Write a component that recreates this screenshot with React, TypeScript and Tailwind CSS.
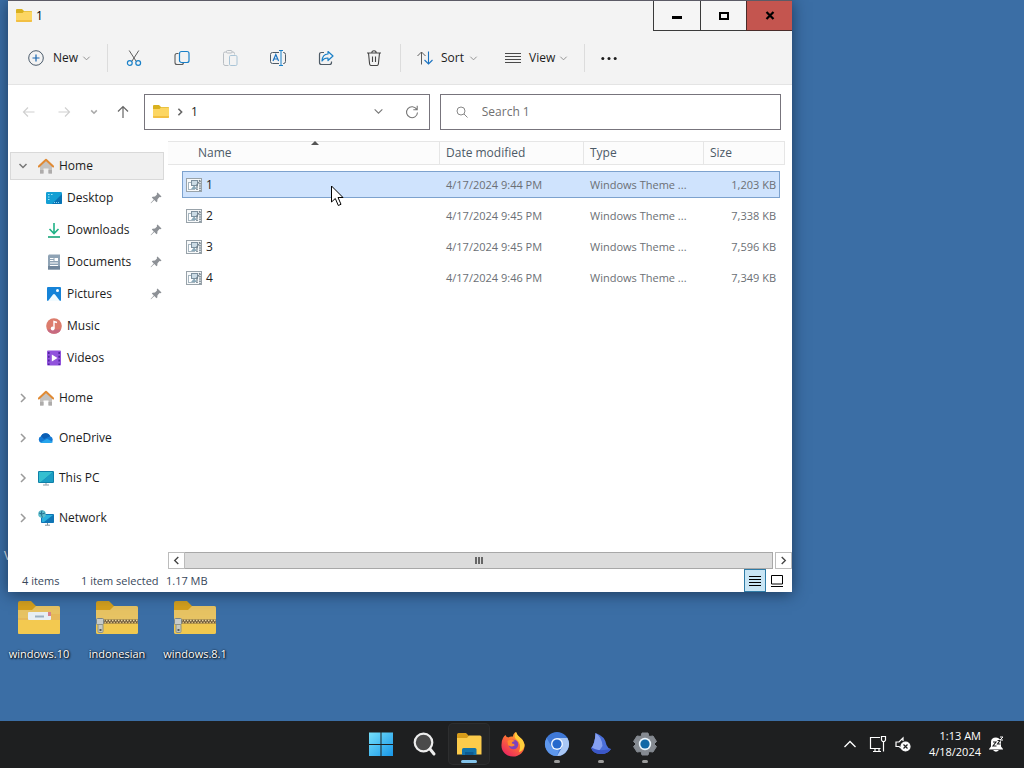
import type { ReactNode } from "react";

const files = [
  { name: "1", date: "4/17/2024 9:44 PM", size: "1,203 KB", selected: true },
  { name: "2", date: "4/17/2024 9:45 PM", size: "7,338 KB", selected: false },
  { name: "3", date: "4/17/2024 9:45 PM", size: "7,596 KB", selected: false },
  { name: "4", date: "4/17/2024 9:46 PM", size: "7,349 KB", selected: false },
];

const Chevron = ({ dir = "down", className = "" }: { dir?: "down" | "right" | "left"; className?: string }) => {
  const paths = { down: "M1.5 3 L5 6.5 L8.5 3", right: "M3 1 L7 5 L3 9", left: "M7 1 L3 5 L7 9" };
  return (
    <svg viewBox="0 0 10 10" className={`shrink-0 ${className}`} fill="none" stroke="currentColor">
      <path d={paths[dir]} />
    </svg>
  );
};

const Icon = ({ children }: { children: ReactNode }) => (
  <svg viewBox="0 0 16 16" className="size-4 shrink-0" fill="none" aria-hidden="true">
    {children}
  </svg>
);

const FolderIcon = () => (
  <Icon>
    <path d="M0 2 Q0 1 1 1 H6 L8 3 H15 Q16 3 16 4 V8 H0Z" fill="#d9b11f" />
    <path d="M0 5 H6.5 L8 3.5 H15 Q16 3.5 16 4.5 V13 Q16 14 15 14 H1 Q0 14 0 13Z" fill="#fcd663" />
    <path d="M0 12 H16 V13 Q16 14 15 14 H1 Q0 14 0 13Z" fill="#f2bf42" />
  </Icon>
);

const HomeIcon = () => (
  <Icon>
    <path d="M2 7 L8 2 L14 7 V15.5 H10.5 V10.5 H5.5 V15.5 H2Z" fill="#c4c2c0" />
    <path d="M2 12 H5.5 V15.5 H2Z M10.5 12 H14 V15.5 H10.5Z" fill="#aeacab" />
    <path d="M0.8 8.5 L8 1.8 L15.2 8.5" stroke="#e08a34" strokeWidth="2" strokeLinejoin="round" strokeLinecap="round" />
  </Icon>
);

const DesktopIcon = () => (
  <Icon>
    <rect y="2" width="16" height="12" rx="1.2" fill="#149fd4" />
    <path d="M6 14 L16 4 V13 Q16 14 15 14Z" fill="#0873b4" />
    <path d="M2 4.5h1.5M2 7h1.5M2 9.5h1.5M5 4.5h1.5" stroke="#9be7fb" />
    <path d="M8 12.5h6" stroke="#8ed5f4" strokeDasharray="1 1" />
  </Icon>
);

const DownloadsIcon = () => (
  <Icon>
    <path d="M8 1 V11.5 M3.5 7 L8 11.5 L12.5 7" stroke="#1fb286" strokeWidth="1.6" />
    <path d="M2 15 H14" stroke="#17a578" strokeWidth="1.6" />
  </Icon>
);

const DocumentsIcon = () => (
  <Icon>
    <path d="M3 0.5 H14 V15.5 H2 V1.5Z" fill="#8fa3b5" />
    <path d="M2 12 H14 V15.5 H2Z" fill="#70859a" />
    <path d="M4 4.5h3.5M4 6.5h3.5M4 9h8M4 11.5h8" stroke="#fff" />
    <rect x="8.5" y="4" width="3.5" height="3" fill="#fff" />
  </Icon>
);

const PicturesIcon = () => (
  <Icon>
    <rect x="1" y="1" width="14" height="14" rx="1" fill="#1683d8" />
    <path d="M2 15 L7 8.5 Q8 7.5 9 8.5 L14 15Z" fill="#f2fbff" />
    <circle cx="11.5" cy="4.5" r="1.5" fill="#fff" />
  </Icon>
);

const MusicIcon = () => (
  <Icon>
    <circle cx="8" cy="8" r="7.8" fill="#dc7c6c" />
    <path d="M1 11.5 A7.8 7.8 0 0 0 15 11.5Z" fill="#c76a80" />
    <circle cx="6.7" cy="10.5" r="1.9" fill="#fff" />
    <path d="M8 10.5 V3.5 L11 4.5" stroke="#fff" strokeWidth="1.4" />
  </Icon>
);

const VideosIcon = () => (
  <Icon>
    <rect x="1" y="0.5" width="14" height="15" rx="1" fill="#9152dc" />
    <path d="M2.8 2 V15 M13.2 2 V15" stroke="#4e249c" strokeWidth="1.6" strokeDasharray="2 1.8" />
    <path d="M5.8 4.5 L11.5 8 L5.8 11.5Z" fill="#fff" />
  </Icon>
);

const OneDriveIcon = () => (
  <Icon>
    <path d="M3.5 13 A3.5 3.5 0 0 1 3 6.3 A5 5 0 0 1 12.2 6.2 A3.6 3.6 0 0 1 12.5 13Z" fill="#1479d4" />
    <path d="M3 6.3 A5 5 0 0 1 12.2 6.2 L6 9Z" fill="#0b5eb4" />
    <path d="M2.5 12.5 L9 8.7 L15 12 Q14 13 12.5 13 H3.5Z" fill="#27a5ec" />
  </Icon>
);

const PcIcon = () => (
  <Icon>
    <rect y="1" width="16" height="12" rx="1" fill="#0f80a8" />
    <path d="M1 2 H15 L3 12 H1Z" fill="#35bfd0" />
    <path d="M15 2 V12 H3Z" fill="#1b9dc4" />
    <path d="M8 13 V14.8 M5 15 H11" stroke="#8a9aa5" />
  </Icon>
);

const NetworkIcon = () => (
  <Icon>
    <rect x="3" y="4" width="13" height="9" rx="0.8" fill="#0f75b5" />
    <path d="M4 5 H15 L6 12 H4Z" fill="#2bb1dd" />
    <path d="M9.5 13 V15 M7 15.2 H12" stroke="#7f919d" />
    <circle cx="4" cy="4" r="3.8" fill="#5cbccb" />
    <path d="M1 3 Q4 5 7 3 M4 0.5 Q2 4 4.5 7.5" stroke="#256f90" />
  </Icon>
);

const ThemeIcon = () => (
  <Icon>
    <rect x="0.5" y="1.5" width="15" height="13" fill="#f7f9fa" stroke="#98a2a9" />
    <rect x="2.5" y="5.5" width="6" height="7" fill="#fff" stroke="#a6b5bf" />
    <rect x="5.5" y="3.5" width="6" height="5" fill="#cbdbe5" stroke="#7d909e" />
    <path d="M5 12 L8 8.500 L11 12Z" fill="#8aa9b9" />
    <path d="M11 13 V8 L14 3 V14" stroke="#71818c" strokeWidth="1.6" strokeDasharray="1.5 0.8" />
  </Icon>
);

const PinIcon = () => (
  <svg viewBox="0 0 12 12" className="size-3 shrink-0" aria-hidden="true">
    <path d="M7.5 0.5 L11.5 4.5 L10.5 5.2 L9.5 5 L7.5 7.2 L7.3 9.5 L6.5 10.2 L4.3 8 L1 11.3 L0.6 11 L3.8 7.5 L1.8 5.5 L2.6 4.7 L5 4.5 L7 2.5 L6.8 1.3Z" fill="#8d9196" />
  </svg>
);

const quickAccess = [
  { label: "Desktop", icon: <DesktopIcon />, pinned: true },
  { label: "Downloads", icon: <DownloadsIcon />, pinned: true },
  { label: "Documents", icon: <DocumentsIcon />, pinned: true },
  { label: "Pictures", icon: <PicturesIcon />, pinned: true },
  { label: "Music", icon: <MusicIcon />, pinned: false },
  { label: "Videos", icon: <VideosIcon />, pinned: false },
];

const roots = [
  { label: "Home", icon: <HomeIcon /> },
  { label: "OneDrive", icon: <OneDriveIcon /> },
  { label: "This PC", icon: <PcIcon /> },
  { label: "Network", icon: <NetworkIcon /> },
];

const tools = [
  {
    label: "Cut",
    icon: (
      <Icon>
        <path d="M3.2 0.5 L10.3 11.5 M12.8 0.5 L5.7 11.5" stroke="#5c5c5c" />
        <circle cx="3.8" cy="13" r="2.4" stroke="#1a80c8" strokeWidth="1.2" />
        <circle cx="12.2" cy="13" r="2.4" stroke="#1a80c8" strokeWidth="1.2" />
      </Icon>
    ),
  },
  {
    label: "Copy",
    icon: (
      <Icon>
        <path d="M4.5 3.5 H3 Q1 3.5 1 5.5 V12.5 Q1 14.5 3 14.5 H7.5 Q9.5 14.5 9.5 12.5" stroke="#5c5c5c" strokeWidth="1.1" />
        <rect x="5.5" y="1.5" width="9.5" height="11" rx="2" stroke="#1a80c8" strokeWidth="1.2" />
      </Icon>
    ),
  },
  {
    label: "Paste",
    icon: (
      <Icon>
        <path d="M4.5 2 H3 Q1.5 2 1.5 3.5 V13.5 Q1.5 15.5 3 15.5 H6.5 M10 2 H11 Q12.5 2 12.5 3.5 V4.5" stroke="#b9bec3" />
        <rect x="4.5" y="0.5" width="5.5" height="2.5" rx="1" stroke="#b9bec3" />
        <rect x="7.5" y="5.5" width="7.5" height="10" rx="1.2" stroke="#a9c4d6" />
      </Icon>
    ),
  },
  {
    label: "Rename",
    icon: (
      <Icon>
        <path d="M9 2.5 H2.5 Q0.5 2.5 0.5 4.5 V11.5 Q0.5 13.5 2.5 13.5 H9 M13 2.5 H13.5 Q15.5 2.5 15.5 4.5 V11.5 Q15.5 13.5 13.5 13.5 H13" stroke="#4e5b66" />
        <path d="M3 11 L5.8 4.5 L8.6 11 M4 9 H7.6" stroke="#1a72c0" strokeWidth="1.2" />
        <path d="M9 0.5 H13 M9 15.5 H13 M11 0.5 V15.5" stroke="#1a80c8" />
      </Icon>
    ),
  },
  {
    label: "Share",
    icon: (
      <Icon>
        <path d="M6 2.5 H3.5 Q1.5 2.5 1.5 4.5 V12.5 Q1.5 14.5 3.5 14.5 H11.5 Q13.5 14.5 13.5 12.5 V11.5" stroke="#4e5b66" strokeWidth="1.2" />
        <path d="M10 1.5 L15 6 L10 10.5 V8 Q6 7.8 4 11 Q4.3 4.3 10 4Z" stroke="#1a80c8" strokeWidth="1.2" strokeLinejoin="round" />
      </Icon>
    ),
  },
  {
    label: "Delete",
    icon: (
      <Icon>
        <path d="M1 3 H15 M5.8 3 Q5.8 0.7 8 0.7 Q10.2 0.7 10.2 3 M2.5 3 L3.6 14 Q3.8 15.5 5.2 15.5 H10.8 Q12.2 15.5 12.4 14 L13.5 3" stroke="#454545" strokeWidth="1.1" />
        <path d="M6.5 6.5 V12 M9.5 6.5 V12" stroke="#454545" strokeWidth="1.1" />
      </Icon>
    ),
  },
];

const Toolbar = () => (
  <div className="flex h-[54px] items-center border-b border-[#e4e4e4] pt-px pl-5 text-[#1c1c1c]">
    <button className="flex items-center">
      <Icon>
        <circle cx="8" cy="8" r="7.3" stroke="#4b5b6b" />
        <path d="M8 4.5 V11.5 M4.5 8 H11.5" stroke="#1a66b0" strokeWidth="1.2" />
      </Icon>
      <span className="w-[38px] pl-[9px] text-left">New</span>
      <Chevron className="size-[9px] text-[#888]" />
    </button>
    <span className="ml-4 h-7 w-px bg-[#dcdcdc]" />
    <div className="ml-[2px] flex">
      {tools.map((t) => (
        <button key={t.label} aria-label={t.label} className="flex h-8 w-12 items-center justify-center">
          {t.icon}
        </button>
      ))}
    </div>
    <span className="ml-[2px] h-7 w-px bg-[#dcdcdc]" />
    <button className="ml-4 flex items-center">
      <Icon>
        <path d="M4.5 14.5 V2 M0.5 6 L4.5 2 L8.5 6" stroke="#5c5c5c" />
        <path d="M11.5 1.5 V14 M7.5 10 L11.5 14 L15.5 10" stroke="#1a72c0" strokeWidth="1.1" />
      </Icon>
      <span className="w-9 pl-2 text-left">Sort</span>
      <Chevron className="size-[9px] text-[#888]" />
    </button>
    <button className="ml-[27px] flex items-center">
      <Icon>
        <path d="M0 3.5 H16 M0 6.5 H16 M0 9.5 H16 M0 12.5 H16" stroke="#4a4a4a" />
      </Icon>
      <span className="w-[38px] pl-2 text-left">View</span>
      <Chevron className="size-[9px] text-[#888]" />
    </button>
    <span className="ml-4 h-7 w-px bg-[#dcdcdc]" />
    <button aria-label="See more" className="ml-4">
      <Icon>
        <circle cx="1.8" cy="8.5" r="1.5" fill="#1c1c1c" />
        <circle cx="8" cy="8.5" r="1.5" fill="#1c1c1c" />
        <circle cx="14.2" cy="8.5" r="1.5" fill="#1c1c1c" />
      </Icon>
    </button>
  </div>
);

const AddressRow = () => (
  <div className="flex h-14 items-center bg-white pr-[11px] pb-[2px] text-[#707070]">
    <button aria-label="Back" className="ml-[13px] text-[#d0d0d0]">
      <Icon><path d="M13.5 8 H2.5 M7 3.5 L2.5 8 L7 12.5" stroke="currentColor" strokeWidth="1.2" /></Icon>
    </button>
    <button aria-label="Forward" className="ml-[19px] text-[#d0d0d0]">
      <Icon><path d="M2.5 8 H13.5 M9 3.5 L13.5 8 L9 12.5" stroke="currentColor" strokeWidth="1.2" /></Icon>
    </button>
    <button aria-label="Recent locations" className="ml-[18px] text-[#aaa]">
      <Chevron className="size-2 stroke-2" />
    </button>
    <button aria-label="Up" className="ml-[17px] text-[#666]">
      <Icon><path d="M8 14 V2.5 M3 7.5 L8 2.5 L13 7.5" stroke="currentColor" strokeWidth="1.2" /></Icon>
    </button>
    <div className="ml-[13px] flex h-9 grow-[283] basis-0 items-center border border-[#77747c] bg-white pr-[9px] pb-px pl-2 text-[#1c1c1c]">
      <FolderIcon />
      <Chevron dir="right" className="ml-[7px] size-2 stroke-2 text-[#666]" />
      <button className="ml-[7px]">1</button>
      <button aria-label="Previous locations" className="ml-auto text-[#777]">
        <Chevron className="size-[11px]" />
      </button>
      <button aria-label="Refresh" className="ml-5 text-[#777]">
        <Icon>
          <path d="M12.8 5.5 A5.500 5.500 0 1 0 13.500 8.500 M13.2 1.8 V5.700 H9.3" stroke="currentColor" strokeWidth="1.1" />
        </Icon>
      </button>
    </div>
    <label className="ml-[10px] flex h-9 grow-[344] basis-0 items-center border border-[#77747c] bg-white pl-[15px] text-[#888]">
      <svg viewBox="0 0 12 12" className="size-3 shrink-0" fill="none" stroke="currentColor" aria-hidden="true">
        <circle cx="5" cy="5" r="4" />
        <path d="M8 8 L11.5 11.5" />
      </svg>
      <input
        type="search"
        aria-label="Search 1"
        placeholder="Search 1"
        className="ml-[14px] w-full min-w-0 outline-none placeholder:text-[#707070]"
      />
    </label>
  </div>
);

const Sidebar = () => (
  <nav className="w-40 shrink-0 pt-[11px] pl-[2px] text-[#1c1c1c]">
    <a href="#home" className="flex h-7 w-[154px] items-center border border-[#d9d9d9] bg-[#f0f0f0] pl-[7px]">
      <Chevron className="size-[10px] stroke-[1.5] text-[#777]" />
      <span className="mr-[5px] ml-[10px]"><HomeIcon /></span>
      Home
    </a>
    <ul className="pt-[2px]">
      {quickAccess.map((q) => (
        <li key={q.label}>
          <a href={`#${q.label}`} className="flex h-8 items-center gap-[5px] pl-9">
            {q.icon}
            <span className="w-[78px]">{q.label}</span>
            {q.pinned && <PinIcon />}
          </a>
        </li>
      ))}
    </ul>
    <ul className="pt-1">
      {roots.map((r) => (
        <li key={r.label}>
          <a href={`#${r.label}`} className="flex h-10 items-center pl-2">
            <Chevron dir="right" className="size-[10px] stroke-[1.5] text-[#9a9a9a]" />
            <span className="mr-[5px] ml-[10px]">{r.icon}</span>
            {r.label}
          </a>
        </li>
      ))}
    </ul>
  </nav>
);

const FileTable = () => (
  <table className="relative w-full table-fixed border-collapse">
    <thead className="text-left text-[#4c5a67]">
      <tr>
        <th className="relative p-0 pb-[2px] font-normal">
          <div className="flex h-6 items-center border-y border-[#e6e6e6] bg-[#fcfcfc] pl-[30px]">Name</div>
          <svg viewBox="0 0 8 4" className="absolute top-0 left-[143px] h-1 w-2"><path d="M0 4 L4 0 L8 4Z" fill="#555" /></svg>
        </th>
        <th className="w-36 p-0 pb-[2px] font-normal">
          <div className="flex h-6 items-center border-y border-l border-[#e6e6e6] bg-[#fcfcfc] pl-[6px]">Date modified</div>
        </th>
        <th className="w-[120px] p-0 pb-[2px] font-normal">
          <div className="flex h-6 items-center border-y border-l border-[#e6e6e6] bg-[#fcfcfc] pl-[6px]">Type</div>
        </th>
        <th className="w-[82px] p-0 pb-[2px] font-normal">
          <div className="flex h-6 items-center border border-[#e6e6e6] bg-[#fcfcfc] pl-[6px]">Size</div>
        </th>
      </tr>
    </thead>
    <tbody className="text-[11px] text-[#6b6f75]">
      {files.map((f) => {
        const cell = f.selected ? "border-y border-[#7da2ce] bg-[#cfe3fd]" : "border-y border-transparent";
        return (
          <tr key={f.name} aria-selected={f.selected}>
            <td className="p-0 pt-1">
              <div className={`ml-[14px] flex h-[27px] items-center gap-1 border-l pl-[3px] text-[12px] text-[#1c1c1c] ${cell}`}>
                <ThemeIcon />
                {f.name}
              </div>
            </td>
            <td className="p-0 pt-1">
              <div className={`flex h-[27px] items-center pl-[7px] whitespace-nowrap ${cell}`}>{f.date}</div>
            </td>
            <td className="p-0 pt-1">
              <div className={`flex h-[27px] items-center pl-[7px] whitespace-nowrap ${cell}`}>Windows Theme ...</div>
            </td>
            <td className="p-0 pt-1">
              <div className={`mr-[5px] flex h-[27px] items-center justify-end border-r pr-[3px] whitespace-nowrap ${cell}`}>{f.size}</div>
            </td>
          </tr>
        );
      })}
    </tbody>
  </table>
);

const ExplorerWindow = () => (
  <section className="relative mr-[232px] flex min-h-[592px] flex-1 flex-col border-t border-[#5c5b66] bg-white shadow-[0_2px_14px_rgba(15,35,60,0.7)]">
    <header className="flex h-[30px] bg-[#f3f3f3]">
      <div className="flex flex-1 items-center gap-1 pb-px pl-2 text-black">
        <FolderIcon />
        <h1>1</h1>
      </div>
      <button aria-label="Minimize" className="flex w-[47px] items-center justify-center border-b border-l border-[#3a3a3a] bg-[#f5f5f5]">
        <svg viewBox="0 0 12 12" className="size-3"><rect x="1" y="6" width="10" height="3" /></svg>
      </button>
      <button aria-label="Maximize" className="flex w-[46px] items-center justify-center border-b border-l border-[#3a3a3a] bg-[#f5f5f5]">
        <svg viewBox="0 0 12 12" className="size-3" fill="none" stroke="#000" strokeWidth="2"><rect x="2" y="3" width="8" height="6" /></svg>
      </button>
      <button aria-label="Close" className="flex w-[46px] items-center justify-center border-b border-l border-[#4a2c2a] bg-[#c4554f]">
        <svg viewBox="0 0 12 12" className="size-3" fill="none" stroke="#000" strokeWidth="2.2"><path d="M2.5 2 L9.5 9 M9.5 2 L2.5 9" /></svg>
      </button>
    </header>
    <div className="bg-[#f3f3f3]"><Toolbar /></div>
    <AddressRow />
    <div className="flex flex-1">
      <Sidebar />
      <div className="flex min-w-0 flex-1 flex-col">
        <div className="relative flex-1 pr-[7px]">
          <FileTable />
          {/* mouse pointer */}
          <svg viewBox="0 0 13 22" className="absolute top-11 left-[163px] h-[22px] w-[13px]">
            <path d="M0.5 1 V17 L4.3 13.5 L7.3 20.5 L10 19.3 L7 12.5 H12Z" fill="#fff" stroke="#000" />
          </svg>
        </div>
        <div className="flex h-[17px]">
          <button aria-label="Scroll left" className="flex w-[17px] items-center justify-center border border-[#bcbcbc] bg-white text-[#444]">
            <Chevron dir="left" className="size-[9px] stroke-[1.5]" />
          </button>
          <div className="flex flex-1 items-center justify-center gap-px border-y border-r border-[#a8a8a8] bg-[#dcdcdc]">
            <span className="h-[7px] w-[2px] bg-[#666]" />
            <span className="h-[7px] w-[2px] bg-[#666]" />
            <span className="h-[7px] w-[2px] bg-[#666]" />
          </div>
          <button aria-label="Scroll right" className="ml-[2px] flex w-[17px] items-center justify-center border border-[#bcbcbc] bg-white text-[#444]">
            <Chevron dir="right" className="size-[9px] stroke-[1.5]" />
          </button>
        </div>
      </div>
    </div>
    <footer className="flex h-[23px] items-center pl-[14px] text-[11px] text-[#38475a]">
      <span className="w-[59px]">4 items</span>
      <span className="w-[85px] whitespace-nowrap">1 item selected</span>
      <span>1.17 MB</span>
      <button aria-label="Details view" className="ml-auto flex h-[23px] w-[22px] items-center justify-center border border-[#2f7ba6] bg-[#c8e5f5]">
        <svg viewBox="0 0 12 12" className="size-3" stroke="#000"><path d="M0 1.5h12M0 4.5h12M0 7.5h12M0 10.5h12" /></svg>
      </button>
      <button aria-label="Large icons" className="mr-[9px] ml-[5px]">
        <svg viewBox="0 0 12 12" className="size-3" fill="none" stroke="#000"><path d="M0.5 0.5h11v8.500h-11z M0 11.5h12" /></svg>
      </button>
    </footer>
  </section>
);

const BigFolder = ({ zip }: { zip?: boolean }) => (
  <svg viewBox="0 0 44 36" className="h-9 w-11" fill="none" aria-hidden="true">
    <path d="M1 3 Q1 1 3 1 H14 L19 6 H41 Q43 6 43 8 V20 H1Z" fill="#d5a01c" />
    <path d="M1 10 H15 L19 6 H41 Q43 6 43 8 V32 Q43 34 41 34 H3 Q1 34 1 32Z" fill="#e7c363" />
    <path d="M1 22 H43 V32 Q43 34 41 34 H3 Q1 34 1 32Z" fill="#f0c84f" />
    {zip ? (
      <>
        <path d="M8 21.5 H43" stroke="#6d5a3b" strokeWidth="4" />
        <path d="M8 20.5 H43" stroke="#e8d6a4" strokeWidth="1.5" strokeDasharray="1.5 1.5" />
        <path d="M9.5 22.5 H43" stroke="#d8b97a" strokeWidth="1.5" strokeDasharray="1.5 1.5" />
        <rect x="1.5" y="18.5" width="7" height="6" rx="1" fill="#c6cbc9" stroke="#7c8583" />
        <rect x="3" y="24.5" width="5" height="8" rx="1" fill="#c3c8c2" stroke="#8c9288" />
        <rect x="4.5" y="29" width="2" height="2" fill="#555b58" />
      </>
    ) : (
      <>
        <path d="M1 18 H12 L17 14 H43 V32 Q43 34 41 34 H3 Q1 34 1 32Z" fill="#e6b95a" />
        <rect x="11" y="12" width="23" height="8" rx="1" fill="#e8eff5" />
        <path d="M18 16.5 H27" stroke="#9bb0c2" strokeWidth="2" />
        <rect x="31" y="12" width="3" height="4" fill="#d8828c" />
        <path d="M1 20 H43 V32 Q43 34 41 34 H3 Q1 34 1 32Z" fill="#f3c950" />
      </>
    )}
  </svg>
);

const shortcuts = [
  { label: "windows.10", zip: false },
  { label: "indonesian", zip: true },
  { label: "windows.8.1", zip: true },
];

const apps = [
  {
    label: "Start",
    icon: (
      <path d="M0 0.5h11.5v11.5H0zM12.5 0.5H24v11.5H12.5zM0 13h11.5v11H0zM12.5 13H24v11H12.5z" fill="url(#win)" />
    ),
  },
  {
    label: "Search",
    icon: (
      <>
        <circle cx="10.5" cy="10.5" r="8.8" fill="#4a4a4a" stroke="#ededed" strokeWidth="2.2" />
        <path d="M17 17 L21 22" stroke="#ededed" strokeWidth="3" strokeLinecap="round" />
      </>
    ),
  },
  {
    label: "File Explorer",
    active: true,
    icon: (
      <>
        <path d="M0 2.5 Q0 1 1.5 1 H9 L12 4 H24 V10 H0Z" fill="#d89c1a" />
        <path d="M0 6 H10 L12 3.5 H23 Q24.5 3.5 24.5 5 V22.5 H0Z" fill="#fccb4b" />
        <path d="M5 23 V17.5 Q5 16 6.5 16 H18 Q19.5 16 19.5 17.5 V23Z" fill="#1474aa" />
        <path d="M8 23 V20 H16.5 V23Z" fill="#0e5b91" />
      </>
    ),
  },
  {
    label: "Firefox",
    icon: (
      <>
        <path d="M2 6 Q3 4 4.5 3 Q5 5 7.5 5.5 Q9 4 12 4.5 Q12 1.5 15 0 Q16 3.5 19 5.5 Q23.5 9 23.5 14 A11.5 10.5 0 0 1 0.5 14 Q0.3 9 2 6Z" fill="url(#fox)" />
        <circle cx="12.5" cy="12.5" r="4.8" fill="#7d43bd" />
        <path d="M6.500 9 Q10 6.500 14 9 Q10 9.500 11 11.500 Q14 12 13.500 13.500 Q10 15.500 7 13Z" fill="#ff8b2c" />
        <path d="M15 0 Q16 3.5 19 5.5 Q23.5 9 23.5 14 Q22 19 18 20 Q21 12 16 8 Q12 5 15 0Z" fill="#ffce3b" />
      </>
    ),
  },
  {
    label: "Chromium",
    running: true,
    icon: (
      <>
        <circle cx="12" cy="12" r="12" fill="#3f78d6" />
        <path d="M12 6 H22.4 A12 12 0 0 1 12 24 L17.2 15Z" fill="#a9c7f5" />
        <path d="M1.6 6 L6.8 15 A6 6 0 0 0 14 17.7 L12 24 A12 12 0 0 1 1.6 6Z" fill="#5e97ec" />
        <circle cx="12" cy="12" r="6" fill="#f0f6ff" />
        <circle cx="12" cy="12" r="4.6" fill="#2668cc" />
      </>
    ),
  },
  {
    label: "Fin",
    running: true,
    icon: (
      <>
        <path d="M6.5 1 Q16 4 17.5 13 Q18.500 16 22 17 Q19 22 12 22 Q3 21.500 2.500 16 Q6 11 6.5 1Z" fill="#4a6fdb" />
        <path d="M6.5 1 Q13 5 13.5 14 L10 19 Q3 20 2.500 16 Q6 11 6.5 1Z" fill="#86a0f0" />
        <path d="M2 15 Q8 20 22 17 Q19 22 12 22 Q3 21.500 2 15Z" fill="#3b57c8" />
      </>
    ),
  },
  {
    label: "Settings",
    running: true,
    icon: (
      <>
        <path d="M9 1 H15 L16 4.5 L20 4 L23.500 9.500 L21 12 L23.500 14.5 L20 20 L16 19.500 L15 23 H9 L8 19.500 L4 20 L0.5 14.5 L3 12 L0.5 9.500 L4 4 L8 4.5Z" fill="#858a91" strokeLinejoin="round" stroke="#858a91" />
        <circle cx="12" cy="12" r="6.2" fill="#eaf4fb" />
        <circle cx="12" cy="12" r="4.6" fill="#1268a6" />
      </>
    ),
  },
];

const Taskbar = () => (
  <footer className="grid h-[47px] shrink-0 grid-cols-[1fr_auto_1fr] bg-[#1e1f20] text-white">
    <svg viewBox="0 0 24 24" className="size-0">
      <defs>
        <linearGradient id="win" x1="0" y1="0" x2="1" y2="1">
          <stop stopColor="#76e0fb" />
          <stop offset="1" stopColor="#1796e8" />
        </linearGradient>
        <linearGradient id="fox" x1="1" y1="0" x2="0.3" y2="1">
          <stop stopColor="#ffc832" />
          <stop offset="0.5" stopColor="#ff7036" />
          <stop offset="1" stopColor="#ea285e" />
        </linearGradient>
      </defs>
    </svg>
    <div className="flex justify-center pl-[2px]">
      {apps.map((a) => (
        <button key={a.label} aria-label={a.label} className="flex w-11 flex-col items-center pt-[3px]">
          <span className={`flex size-10 flex-col items-center pt-2 ${a.active ? "rounded bg-[#242526] ring-1 ring-[#2d2e2f]" : ""}`}>
            <svg viewBox="0 0 24 24" className="size-6 shrink-0 overflow-visible" fill="none">{a.icon}</svg>
            {a.active && <span className="mt-1 h-[3px] w-4 shrink-0 rounded-full bg-[#83c3ea]" />}
            {a.running && <span className="mt-1 h-[3px] w-[6px] shrink-0 rounded-full bg-[#9b9b9b]" />}
          </span>
        </button>
      ))}
    </div>
    <div className="flex items-center justify-end pr-5 pb-px">
      <button aria-label="Show hidden icons">
        <svg viewBox="0 0 14 14" className="size-[14px]" fill="none" stroke="#fff" strokeWidth="1.3"><path d="M1.5 10 L7 4.5 L12.5 10" /></svg>
      </button>
      <button aria-label="Network" className="ml-3">
        <svg viewBox="0 0 18 18" className="size-[18px]" fill="none" stroke="#fff" strokeWidth="1.2">
          <path d="M11 2.5 H1.5 V13.5 H11.5 M4 16.5 H12 M6 13.5 V16.5 M10 13.5 V16.5 M14.5 7 V16.5" />
          <path d="M12.5 1.5 H16.5 V5 L15.5 6.5 H13.5 L12.5 5Z" />
        </svg>
      </button>
      <button aria-label="Volume muted" className="ml-2">
        <svg viewBox="0 0 16 16" className="size-4" fill="none" stroke="#fff" strokeWidth="1.2">
          <path d="M6 12 L4 10.5 H1 V6 H4 L8 2 V5" />
          <circle cx="10.5" cy="10.5" r="4.5" fill="#fff" />
          <path d="M8.5 8.5 L12.5 12.5 M12.5 8.5 L8.5 12.5" stroke="#1e1f20" />
        </svg>
      </button>
      <button className="ml-4 w-[54px] text-[11px] leading-4">
        <time className="flex flex-col items-end whitespace-nowrap"><span>1:13 AM</span><span>4/18/2024</span></time>
      </button>
      <button aria-label="Notifications" className="ml-[7px]">
        <svg viewBox="0 0 16 16" className="size-4" fill="none">
          <path d="M1 13 L3 10.5 V6 Q3 1.5 8 1.5 Q13 2 13 7 V10.5 L15 13 V13.5 H1Z M5 14 Q8 17.500 11 14Z" fill="#fff" />
          <path d="M5 6 H8 L5 10 H8.5" stroke="#1e1f20" strokeWidth="1.1" />
          <path d="M9.5 4.5 H12 L9.5 8 H12.500" stroke="#1e1f20" strokeWidth="1.1" />
          <path d="M12 1 H15 L12 4 H15" stroke="#fff" />
        </svg>
      </button>
    </div>
  </footer>
);

export default function App() {
  return (
    <div className="flex min-h-screen flex-col bg-[#3b6ea5] font-['Open_Sans','Noto_Sans',sans-serif] text-[12px] leading-4">
      <main className="relative flex flex-1 flex-col pl-2">
        {/* label of a shortcut that sits under the window */}
        <span className="absolute top-[548px] left-1 text-white">V</span>
        <ExplorerWindow />
        <div className="flex h-[129px] pt-2">
          {shortcuts.map((s) => (
            <button key={s.label} className="mr-2 -ml-2 flex w-[78px] flex-col items-center text-[11px] text-white [text-shadow:1px_1px_2px_#000,0_0_2px_#000]">
              <BigFolder zip={s.zip} />
              <span className="mt-[10px]">{s.label}</span>
            </button>
          ))}
        </div>
      </main>
      <Taskbar />
    </div>
  );
}
